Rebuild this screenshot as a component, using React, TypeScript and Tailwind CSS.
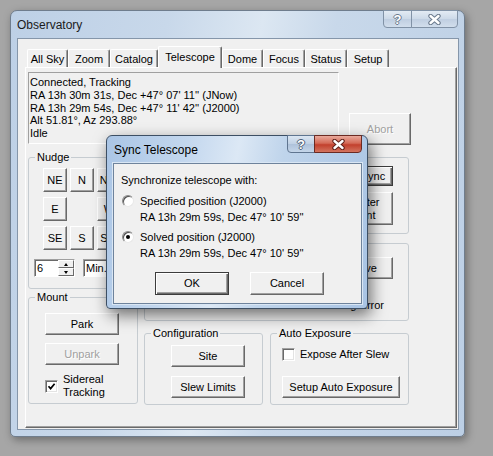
import React from "react";

function Btn({
  children,
  className = "",
  disabled = false,
  isDefault = false,
}: {
  children: React.ReactNode;
  className?: string;
  disabled?: boolean;
  isDefault?: boolean;
}) {
  return (
    <div
      className={
        "flex flex-col items-center justify-center text-center shrink-0 bg-[#f0f0f0] border text-[11px] leading-[13px] " +
        (isDefault
          ? "border-[#3c3c3c] shadow-[inset_1px_1px_0_#ffffff,inset_-1px_-1px_0_#696969,inset_-2px_-2px_0_#a0a0a0] "
          : "border-t-white border-l-white border-r-[#696969] border-b-[#696969] shadow-[inset_-1px_-1px_0_#a0a0a0] ") +
        (disabled ? "text-[#a0a0a0] [text-shadow:1px_1px_0_#ffffff] " : "text-black ") +
        className
      }
    >
      {children}
    </div>
  );
}

function Group({
  label,
  className = "",
  children,
}: {
  label?: string;
  className?: string;
  children?: React.ReactNode;
}) {
  return (
    <fieldset className={"border border-[#c6ccd1] rounded-[3px] min-w-0 shrink-0 " + className}>
      {label ? (
        <legend className="ml-[6px] px-[2px] text-[11px] leading-[13px]">{label}</legend>
      ) : (
        <legend className="ml-[6px] h-[13px]" />
      )}
      {children}
    </fieldset>
  );
}

function Check({ checked = false }: { checked?: boolean }) {
  return (
    <div className="w-[13px] h-[13px] shrink-0 bg-white border border-t-[#a0a0a0] border-l-[#a0a0a0] border-r-white border-b-white shadow-[inset_1px_1px_0_#696969,inset_-1px_-1px_0_#e3e3e3] flex items-center justify-center">
      {checked && (
        <svg width="9" height="9" viewBox="0 0 9 9">
          <path d="M1.5 4.2 L3.6 6.6 L7.6 1.8" fill="none" stroke="#000" strokeWidth="1.7" />
        </svg>
      )}
    </div>
  );
}

function Radio({ checked = false }: { checked?: boolean }) {
  return (
    <div className="w-[12px] h-[12px] shrink-0 rounded-full bg-white border border-t-[#8a8a8a] border-l-[#8a8a8a] border-r-[#e8e8e8] border-b-[#e8e8e8] shadow-[inset_1px_1px_0_#505050] flex items-center justify-center">
      {checked && <div className="w-[4px] h-[4px] rounded-full bg-black" />}
    </div>
  );
}

function XGlyph({ outline }: { outline: string }) {
  return (
    <svg width="13" height="11" viewBox="0 0 13 11">
      <path d="M2.5 2 L10.5 9 M10.5 2 L2.5 9" stroke={outline} strokeWidth="4.4" strokeLinecap="round" fill="none" />
      <path d="M2.5 2 L10.5 9 M10.5 2 L2.5 9" stroke="#ffffff" strokeWidth="2.4" strokeLinecap="round" fill="none" />
    </svg>
  );
}

const tabs = [
  { label: "All Sky", w: "w-[41px]" },
  { label: "Zoom", w: "w-[42px]" },
  { label: "Catalog", w: "w-[48px]" },
  { label: "Telescope", w: "w-[64px]", sel: true },
  { label: "Dome", w: "w-[41px]" },
  { label: "Focus", w: "w-[42px]" },
  { label: "Status", w: "w-[42px]" },
  { label: "Setup", w: "w-[42px]" },
];

export default function App() {
  return (
    <div className="relative w-[493px] h-[456px] overflow-hidden bg-[#a6a6a6] pt-[10px] pl-[10px] text-black font-['Liberation_Sans',Arial,sans-serif]">
      {/* Main window */}
      <div className="w-[455px] h-[427px] flex flex-col border border-[#6f7d8d] rounded-t-[7px] rounded-b-[5px] bg-[linear-gradient(100deg,#bdd0e6_0%,#c8d8ea_30%,#dce7f2_48%,#c8d8ea_62%,#bccfe5_100%)] shadow-[2px_3px_9px_rgba(0,0,0,0.35)]">
        <div className="h-[27px] flex items-center justify-between shrink-0">
          <span className="pl-[6px] text-[12px] text-[#1b1b1b]">Observatory</span>
          <div className="self-start -mt-px mr-[6px] flex">
            <div className="w-[29px] h-[18px] border border-[#8192a6] rounded-bl-[4px] bg-[linear-gradient(#e3ebf4,#ccd9e8_50%,#bfcee1_51%,#d2deec)] flex items-center justify-center">
              <span className="text-[13px] font-bold leading-none text-white [text-shadow:1px_0_#6a7a8d,-1px_0_#6a7a8d,0_1px_#6a7a8d,0_-1px_#6a7a8d]">?</span>
            </div>
            <div className="w-[47px] h-[18px] -ml-px border border-[#8192a6] rounded-br-[4px] bg-[linear-gradient(#e3ebf4,#ccd9e8_50%,#bfcee1_51%,#d2deec)] flex items-center justify-center">
              <XGlyph outline="#6a7a8d" />
            </div>
          </div>
        </div>

        {/* Client area */}
        <div className="ml-[6px] w-[442px] h-[392px] border border-[#8596aa] bg-[#f0f0f0] text-[11px] leading-[13px]">
          {/* Tab strip */}
          <div className="h-[21px] mt-[7px] pl-[9px] flex items-end">
            {tabs.map((t) =>
              t.sel ? (
                <div
                  key={t.label}
                  className={
                    t.w +
                    " relative z-10 h-[22px] -mb-px bg-[#f0f0f0] border-t border-l border-r border-t-white border-l-white border-r-[#696969] shadow-[inset_-1px_0_0_#a0a0a0] rounded-t-[2px] flex items-start justify-center pt-[4px]"
                  }
                >
                  {t.label}
                </div>
              ) : (
                <div
                  key={t.label}
                  className={
                    t.w +
                    " h-[18px] bg-[#f0f0f0] border-t border-l border-r border-t-white border-l-white border-r-[#696969] shadow-[inset_-1px_0_0_#a0a0a0] rounded-t-[2px] flex items-center justify-center pt-[2px]"
                  }
                >
                  {t.label}
                </div>
              )
            )}
          </div>

          {/* Tab panel */}
          <div className="ml-[7px] w-[432px] h-[361px] border border-t-white border-l-white border-r-[#696969] border-b-[#696969] shadow-[inset_-1px_-1px_0_#a0a0a0] pl-[2px] pt-[4px] flex flex-col">
            {/* Status row */}
            <div className="flex items-start">
              <div className="w-[311px] h-[72px] border border-t-[#a0a0a0] border-l-[#a0a0a0] border-r-white border-b-white pl-[1px] pt-[3px] leading-[12.75px]">
                <div>Connected, Tracking</div>
                <div>RA 13h 30m 31s, Dec +47° 07' 11'' (JNow)</div>
                <div>RA 13h 29m 54s, Dec +47° 11' 42'' (J2000)</div>
                <div>Alt 51.81°, Az 293.88°</div>
                <div>Idle</div>
              </div>
              <Btn disabled className="ml-[10px] mt-[41px] w-[62px] h-[32px]">
                Abort
              </Btn>
            </div>

            {/* Main groups */}
            <div className="flex mt-[6px] gap-[6px]">
              {/* Left column */}
              <div className="flex flex-col w-[110px]">
                <Group label="Nudge" className="h-[138px]">
                  <div className="ml-[14px] mt-[4px] grid grid-cols-[24px_24px_24px] grid-rows-[24px_24px_24px] gap-x-[3px] gap-y-[5px]">
                    <Btn className="w-[24px] h-[24px]">NE</Btn>
                    <Btn className="w-[24px] h-[24px]">N</Btn>
                    <Btn className="w-[24px] h-[24px]">NW</Btn>
                    <Btn className="w-[24px] h-[24px]">E</Btn>
                    <div />
                    <Btn className="w-[24px] h-[24px]">W</Btn>
                    <Btn className="w-[24px] h-[24px]">SE</Btn>
                    <Btn className="w-[24px] h-[24px]">S</Btn>
                    <Btn className="w-[24px] h-[24px]">SW</Btn>
                  </div>
                  <div className="flex items-center mt-[9px] ml-[5px]">
                    <div className="w-[41px] h-[18px] bg-white border border-t-[#a0a0a0] border-l-[#a0a0a0] border-r-white border-b-white shadow-[inset_1px_1px_0_#696969] flex">
                      <span className="flex-1 pl-[2px] leading-[16px]">6</span>
                      <div className="w-[16px] flex flex-col">
                        <div className="h-[8px] bg-[#f0f0f0] border border-t-white border-l-white border-r-[#696969] border-b-[#696969] flex items-center justify-center">
                          <div className="w-0 h-0 border-l-[2.5px] border-r-[2.5px] border-b-[3px] border-l-transparent border-r-transparent border-b-black" />
                        </div>
                        <div className="h-[8px] bg-[#f0f0f0] border border-t-white border-l-white border-r-[#696969] border-b-[#696969] flex items-center justify-center">
                          <div className="w-0 h-0 border-l-[2.5px] border-r-[2.5px] border-t-[3px] border-l-transparent border-r-transparent border-t-black" />
                        </div>
                      </div>
                    </div>
                    <div className="ml-[8px] w-[52px] h-[18px] bg-white border border-t-[#a0a0a0] border-l-[#a0a0a0] border-r-white border-b-white shadow-[inset_1px_1px_0_#696969] pl-[2px] leading-[16px]">
                      Min.
                    </div>
                  </div>
                </Group>

                <Group label="Mount" className="h-[113px] mt-[2px]">
                  <Btn className="ml-[16px] mt-[9px] w-[74px] h-[22px]">Park</Btn>
                  <Btn disabled className="ml-[16px] mt-[8px] w-[74px] h-[22px]">
                    Unpark
                  </Btn>
                  <div className="ml-[16px] mt-[8px] flex items-center gap-[5px]">
                    <Check checked />
                    <div>
                      <div>Sidereal</div>
                      <div>Tracking</div>
                    </div>
                  </div>
                </Group>
              </div>

              {/* Right column */}
              <div className="flex flex-col w-[265px]">
                <Group className="h-[83px]">
                  <div className="flex flex-col items-end pr-[15px]">
                    <Btn isDefault className="mt-[2px] w-[40px] h-[20px]">
                      Sync
                    </Btn>
                    <Btn className="mt-[6px] w-[60px] h-[33px]">
                      <span>Center</span>
                      <span>Point</span>
                    </Btn>
                  </div>
                </Group>

                <Group className="h-[84px] mt-[3px]">
                  <div className="flex flex-col items-end pr-[15px]">
                    <Btn className="mt-[7px] w-[60px] h-[22px]">Solve</Btn>
                    <div className="mt-[20px] pr-[9px]">Pointing Error</div>
                  </div>
                </Group>

                <div className="flex mt-[6px] gap-[7px]">
                  <Group label="Configuration" className="w-[119px] h-[78px]">
                    <Btn className="ml-[26px] mt-[5px] w-[74px] h-[22px]">Site</Btn>
                    <Btn className="ml-[26px] mt-[9px] w-[74px] h-[22px]">Slew Limits</Btn>
                  </Group>
                  <Group label="Auto Exposure" className="w-[139px] h-[78px]">
                    <div className="ml-[11px] mt-[8px] flex items-center gap-[5px]">
                      <Check />
                      <span>Expose After Slew</span>
                    </div>
                    <Btn className="ml-[11px] mt-[15px] w-[118px] h-[22px]">Setup Auto Exposure</Btn>
                  </Group>
                </div>
              </div>
            </div>
          </div>
        </div>
      </div>

      {/* Sync Telescope dialog */}
      <div className="absolute left-[106px] top-[135px] w-[262px] h-[174px] flex flex-col border border-[#3d4f64] rounded-t-[6px] rounded-b-[4px] bg-[linear-gradient(100deg,#aac5e5_0%,#c3d7ee_28%,#dce8f5_46%,#bfd4eb_62%,#a9c4e4_100%)] shadow-[3px_6px_16px_rgba(0,0,0,0.55)]">
        <div className="h-[27px] flex items-center justify-between shrink-0">
          <span className="pl-[7px] text-[12px] text-black">Sync Telescope</span>
          <div className="self-start -mt-px mr-[5px] flex">
            <div className="w-[28px] h-[18px] border border-[#5f7590] rounded-bl-[4px] bg-[linear-gradient(#dbe6f2,#bfd0e4_50%,#aec2da_51%,#c4d5e9)] flex items-center justify-center">
              <span className="text-[13px] font-bold leading-none text-white [text-shadow:1px_0_#4f6076,-1px_0_#4f6076,0_1px_#4f6076,0_-1px_#4f6076]">?</span>
            </div>
            <div className="w-[48px] h-[18px] -ml-px border border-[#6b2a22] rounded-br-[4px] bg-[linear-gradient(#e9a99b,#d46a57_45%,#c2402d_55%,#d3745f)] flex items-center justify-center">
              <XGlyph outline="#5e2019" />
            </div>
          </div>
        </div>
        <div className="ml-[6px] w-[249px] h-[141px] border border-[#6e839c] bg-[#f0f0f0] flex flex-col text-[11px] leading-[16px] shadow-[0_0_0_1px_#d9e6f4]">
          <div className="pl-[7px] pt-[8px]">Synchronize telescope with:</div>
          <div className="mt-[5px] ml-[8px] flex items-start gap-[6px]">
            <div className="mt-[2px]">
              <Radio />
            </div>
            <div>
              <div>Specified position (J2000)</div>
              <div>RA 13h 29m 59s, Dec 47° 10' 59''</div>
            </div>
          </div>
          <div className="mt-[4px] ml-[8px] flex items-start gap-[6px]">
            <div className="mt-[2px]">
              <Radio checked />
            </div>
            <div>
              <div>Solved position (J2000)</div>
              <div>RA 13h 29m 59s, Dec 47° 10' 59''</div>
            </div>
          </div>
          <div className="mt-[11px] ml-[41px] flex gap-[21px]">
            <Btn isDefault className="w-[74px] h-[23px]">OK</Btn>
            <Btn className="w-[74px] h-[23px]">Cancel</Btn>
          </div>
        </div>
      </div>
    </div>
  );
}
